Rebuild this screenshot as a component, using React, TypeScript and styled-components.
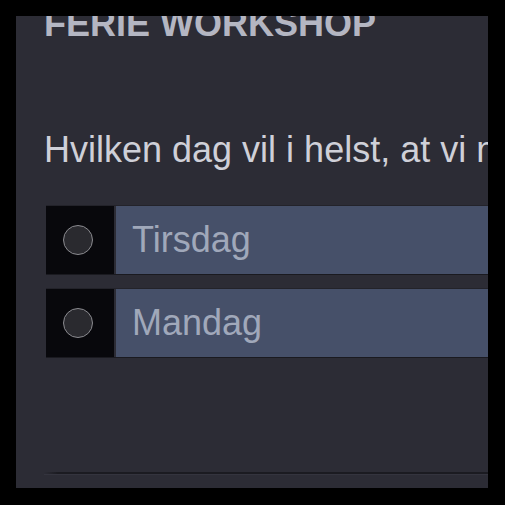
import React from "react";
import styled, { createGlobalStyle } from "styled-components";

const GlobalStyle = createGlobalStyle`
  html, body {
    margin: 0;
    padding: 0;
    background: #000000;
  }
  body {
    font-family: "Liberation Sans", Arial, sans-serif;
  }
`;

const Screen = styled.div`
  width: 505px;
  height: 505px;
  padding: 16px 17px 17px 16px;
  box-sizing: border-box;
  background: #000000;
`;

const Panel = styled.div`
  width: 472px;
  height: 472px;
  background: #2c2c35;
  overflow: hidden;
  padding-left: 28px;
  box-sizing: border-box;
  display: flex;
  flex-direction: column;
`;

const Title = styled.h1`
  margin: -10px 0 0 0;
  font-size: 36px;
  line-height: 36px;
  font-weight: 700;
  color: #b4b6c2;
  white-space: nowrap;
`;

const Question = styled.p`
  margin: 90px 0 0 0;
  font-size: 36px;
  line-height: 36px;
  color: #cfd0d8;
  white-space: nowrap;
`;

const Options = styled.div`
  margin-top: 38px;
  display: flex;
  flex-direction: column;
  gap: 15px;
`;

const Row = styled.label`
  display: flex;
  height: 68px;
  gap: 2px;
  margin-left: 2px;
  box-shadow: 0 1px 0 #1a1a20, 0 -1px 0 #23232a;
`;

const RadioBox = styled.div`
  width: 68px;
  flex-shrink: 0;
  background: #08080c;
  display: flex;
  align-items: center;
  justify-content: center;
  padding-right: 4px;
  box-sizing: border-box;
`;

const Radio = styled.span`
  width: 28px;
  height: 28px;
  border-radius: 50%;
  border: 1.5px solid #8a8a8f;
  background: #2a2a2f;
`;

const Label = styled.div`
  flex: 1;
  min-width: 400px;
  background: #465069;
  display: flex;
  align-items: center;
  padding-left: 16px;
  font-size: 36px;
  color: #a0a8ba;
  white-space: nowrap;
`;

const Divider = styled.div`
  margin-top: auto;
  margin-bottom: 13px;
  height: 2px;
  background: linear-gradient(to right, rgba(27, 27, 33, 0) 0px, #1b1b21 14px);
  border-bottom: 1px solid #34343e;
`;

const options = ["Tirsdag", "Mandag"];

export default function App() {
  return (
    <Screen>
      <GlobalStyle />
      <Panel>
        <Title>FERIE WORKSHOP</Title>
        <Question>Hvilken dag vil i helst, at vi mødes?</Question>
        <Options>
          {options.map((o) => (
            <Row key={o}>
              <RadioBox>
                <Radio />
              </RadioBox>
              <Label>{o}</Label>
            </Row>
          ))}
        </Options>
        <Divider />
      </Panel>
    </Screen>
  );
}
